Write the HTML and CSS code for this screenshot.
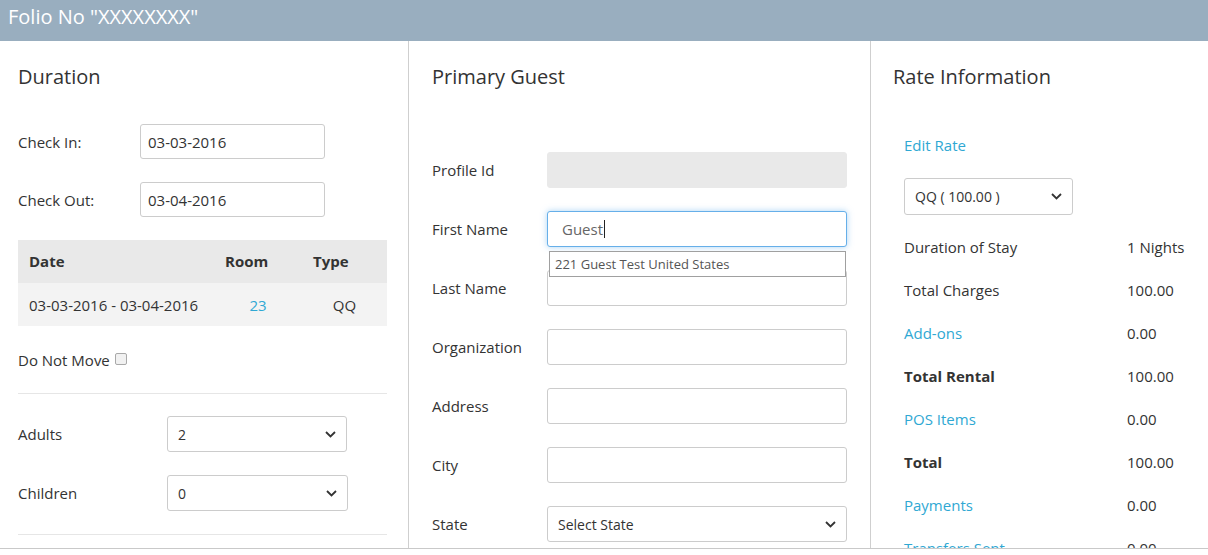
FILE: index.html
```html
<!DOCTYPE html>
<html lang="en">
<head>
<meta charset="utf-8">
<title>Folio</title>
<link rel="stylesheet" href="styles.css">
</head>
<body>
<header class="topbar">Folio No "XXXXXXXX"</header>
<main class="panels">
  <section class="panel panel-duration">
    <h2 class="panel-title">Duration</h2>
    <div class="date-row first">
      <span class="label">Check In:</span>
      <div class="input">03-03-2016</div>
    </div>
    <div class="date-row">
      <span class="label">Check Out:</span>
      <div class="input">03-04-2016</div>
    </div>
    <table class="stay-table">
      <thead>
        <tr><th class="c-date">Date</th><th class="c-room">Room</th><th class="c-type">Type</th></tr>
      </thead>
      <tbody>
        <tr><td class="c-date">03-03-2016 - 03-04-2016</td><td class="c-room link">23</td><td class="c-type">QQ</td></tr>
      </tbody>
    </table>
    <div class="dnm">Do Not Move <span class="checkbox"></span></div>
    <div class="rule"></div>
    <div class="count-row first">
      <span class="label">Adults</span>
      <div class="select"><span>2</span><svg class="chev" width="11" height="7" viewBox="0 0 11 7"><path d="M1 1l4.5 4.5L10 1" fill="none" stroke="#333" stroke-width="1.8"/></svg></div>
    </div>
    <div class="count-row">
      <span class="label">Children</span>
      <div class="select wide"><span>0</span><svg class="chev" width="11" height="7" viewBox="0 0 11 7"><path d="M1 1l4.5 4.5L10 1" fill="none" stroke="#333" stroke-width="1.8"/></svg></div>
    </div>
    <div class="rule"></div>
  </section>

  <section class="panel panel-guest">
    <h2 class="panel-title">Primary Guest</h2>
    <div class="guest-form">
      <div class="g-row first">
        <span class="label">Profile Id</span>
        <div class="input disabled"></div>
      </div>
      <div class="g-row">
        <span class="label">First Name</span>
        <div class="field-wrap">
          <div class="input focused"><span class="typed">Guest</span><span class="caret"></span></div>
          <div class="suggest">221 Guest Test United States</div>
        </div>
      </div>
      <div class="g-row">
        <span class="label">Last Name</span>
        <div class="input"></div>
      </div>
      <div class="g-row">
        <span class="label">Organization</span>
        <div class="input"></div>
      </div>
      <div class="g-row">
        <span class="label">Address</span>
        <div class="input"></div>
      </div>
      <div class="g-row">
        <span class="label">City</span>
        <div class="input"></div>
      </div>
      <div class="g-row">
        <span class="label">State</span>
        <div class="select"><span>Select State</span><svg class="chev" width="11" height="7" viewBox="0 0 11 7"><path d="M1 1l4.5 4.5L10 1" fill="none" stroke="#333" stroke-width="1.8"/></svg></div>
      </div>
    </div>
  </section>

  <section class="panel panel-rate">
    <h2 class="panel-title">Rate Information</h2>
    <div class="rate-body">
      <div class="edit-rate link">Edit Rate</div>
      <div class="select rate-select"><span>QQ ( 100.00 )</span><svg class="chev" width="11" height="7" viewBox="0 0 11 7"><path d="M1 1l4.5 4.5L10 1" fill="none" stroke="#333" stroke-width="1.8"/></svg></div>
      <div class="rate-grid">
        <span>Duration of Stay</span><span>1 Nights</span>
        <span>Total Charges</span><span>100.00</span>
        <span class="link">Add-ons</span><span>0.00</span>
        <span class="strong">Total Rental</span><span>100.00</span>
        <span class="link">POS Items</span><span>0.00</span>
        <span class="strong">Total</span><span>100.00</span>
        <span class="link">Payments</span><span>0.00</span>
        <span class="link">Transfers Sent</span><span>0.00</span>
      </div>
    </div>
  </section>
</main>
</body>
</html>
```

FILE: styles.css
```css
* { box-sizing: border-box; }

body {
  margin: 0;
  font-family: "Open Sans", "Liberation Sans", sans-serif;
  font-size: 15px;
  color: #333;
  background: #fff;
}

.topbar {
  height: 41px;
  background: #99aebf;
  color: #fff;
  font-size: 20px;
  line-height: 33px;
  padding-left: 8px;
}

.panels {
  display: flex;
  height: 508px;
  overflow: hidden;
  border-bottom: 1px solid #c9c9c9;
}

.panel {
  padding-top: 25px;
  border-right: 1px solid #cfcfcf;
}

.panel-duration { width: 409px; padding-left: 18px; padding-right: 21px; }
.panel-guest { width: 462px; padding-left: 23px; padding-right: 23px; }
.panel-rate { flex: 1; padding-left: 22px; border-right: 0; }

.panel-title {
  margin: 0;
  font-size: 20px;
  font-weight: 400;
  line-height: 22px;
  color: #333;
}

.label { line-height: 20px; }

.link { color: #2fa8d3; }

.input {
  height: 36px;
  border: 1px solid #cccccc;
  border-radius: 3px;
  background: #fff;
  padding: 0 7px;
  display: flex;
  align-items: center;
}

.select {
  height: 36px;
  border: 1px solid #cccccc;
  border-radius: 3px;
  background: #fff;
  padding: 0 10px;
  display: flex;
  align-items: center;
  justify-content: space-between;
  font-size: 14px;
}

.chev { display: block; }

/* Duration */
.date-row {
  display: grid;
  grid-template-columns: 122px 185px;
  align-items: center;
  margin-top: 23px;
}
.date-row.first { margin-top: 36px; }
.date-row .input { height: 35px; }

.stay-table {
  margin-top: 23px;
  width: 369px;
  border-collapse: collapse;
}
.stay-table th,
.stay-table td {
  height: 43px;
  padding: 0 11px;
  text-align: left;
}
.stay-table th { background: #e9e9e9; font-weight: 700; padding-bottom: 1px; }
.stay-table td { background: #f3f3f3; }
.stay-table .c-date { width: 196px; }
.stay-table .c-room { width: 88px; }
.stay-table td.c-room,
.stay-table td.c-type { text-align: center; }

.dnm {
  margin-top: 24px;
  line-height: 20px;
  font-size: 15px;
}
.checkbox {
  display: inline-block;
  width: 12px;
  height: 12px;
  border: 1px solid #a9a9a9;
  border-radius: 2px;
  background: #f1f1f1;
  margin-left: 1px;
  vertical-align: 1px;
}

.rule {
  margin-top: 23px;
  border-top: 1px solid #e6e6e6;
}

.count-row {
  display: grid;
  grid-template-columns: 149px 180px;
  align-items: center;
  margin-top: 23px;
}
.count-row.first { margin-top: 22px; }
.count-row .select.wide { width: 181px; }

/* Guest */
.guest-form { margin-top: 64px; }
.g-row {
  display: grid;
  grid-template-columns: 115px 300px;
  align-items: center;
  margin-top: 23px;
}
.g-row.first { margin-top: 0; }
.g-row .input { height: 36px; }
.g-row .select { height: 36px; }
.input.disabled { background: #e9e9e9; border-color: #e9e9e9; }
.input.focused {
  border-color: #66afe9;
  box-shadow: 0 0 6px rgba(102, 175, 233, 0.55);
  padding-left: 14px;
}
.typed { color: #666; }
.caret {
  display: inline-block;
  width: 1px;
  height: 18px;
  background: #222;
  margin-left: 1px;
}
.field-wrap { position: relative; }
.suggest {
  position: absolute;
  left: 2px;
  top: 40px;
  width: 297px;
  height: 26px;
  border: 1px solid #a0a0a0;
  background: #fff;
  font-size: 13px;
  color: #555;
  padding-left: 5px;
  line-height: 24px;
  z-index: 2;
}

/* Rate */
.rate-body { padding-left: 11px; }
.edit-rate {
  margin-top: 47px;
  line-height: 20px;
}
.rate-select {
  margin-top: 23px;
  width: 169px;
  height: 37px;
}
.rate-grid {
  margin-top: 10px;
  display: grid;
  grid-template-columns: 223px auto;
  grid-auto-rows: 43px;
  align-items: center;
}
.strong { font-weight: 700; }
```
